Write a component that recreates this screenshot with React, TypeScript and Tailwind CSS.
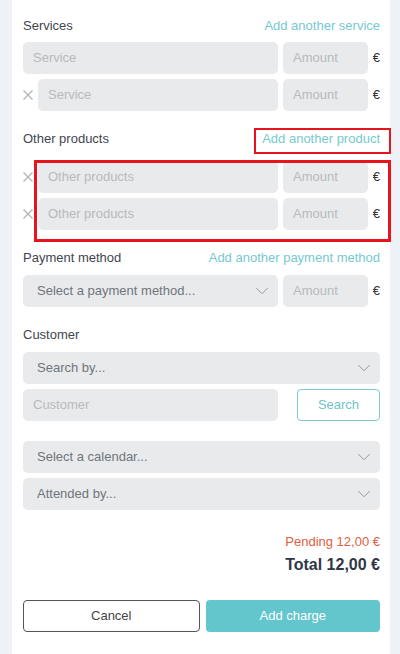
import { ChevronDown } from "lucide-react";

const font = { fontFamily: '"Liberation Sans", Arial, sans-serif' };

function Field({ placeholder, className = "" }: { placeholder: string; className?: string }) {
  return (
    <div
      className={`flex h-[32px] items-center rounded-[5px] bg-[#e9eaec] px-[10px] text-[13px] text-[#b7babe] ${className}`}
    >
      {placeholder}
    </div>
  );
}

function Select({ placeholder, className = "" }: { placeholder: string; className?: string }) {
  return (
    <div
      className={`flex h-[32px] items-center justify-between rounded-[5px] bg-[#e9eaec] pl-[14px] pr-[5px] text-[13px] text-[#6f757c] ${className}`}
    >
      <span>{placeholder}</span>
      <ChevronDown size={22} strokeWidth={1} className="text-[#8d9197]" />
    </div>
  );
}

function RemoveIcon() {
  return (
    <svg width="10" height="10" viewBox="0 0 10 10" className="mr-[5px] shrink-0">
      <path d="M0.5 0.5 L9.5 9.5 M9.5 0.5 L0.5 9.5" stroke="#b0b4b9" strokeWidth="1.3" fill="none" />
    </svg>
  );
}

function AmountRow({
  placeholder,
  removable,
  isSelect,
}: {
  placeholder: string;
  removable?: boolean;
  isSelect?: boolean;
}) {
  return (
    <div className="flex items-center">
      {removable && <RemoveIcon />}
      {isSelect ? (
        <Select placeholder={placeholder} className="flex-1" />
      ) : (
        <Field placeholder={placeholder} className="flex-1" />
      )}
      <Field placeholder="Amount" className="ml-[5px] w-[85px] shrink-0" />
      <span className="w-[12px] shrink-0 text-right text-[13px] text-[#333]">€</span>
    </div>
  );
}

function Label({ title, link }: { title: string; link?: string }) {
  return (
    <div className="flex h-[16px] items-center justify-between text-[13px] leading-[16px]">
      <span className="text-[#3f4550]">{title}</span>
      {link && <span className="text-[#76c9cf]">{link}</span>}
    </div>
  );
}

export default function App() {
  return (
    <div className="flex h-[654px] w-[400px] bg-[#eef2f6]" style={font}>
      <div className="relative ml-[12px] w-[378px] bg-white pl-[11px] pr-[10px]">
        <div className="pt-[18px]">
          <Label title="Services" link="Add another service" />
          <div className="mt-[8px] flex flex-col gap-[5px]">
            <AmountRow placeholder="Service" />
            <AmountRow placeholder="Service" removable />
          </div>
        </div>

        <div className="mt-[20px]">
          <Label title="Other products" link="Add another product" />
          <div className="mt-[14px] flex flex-col gap-[5px]">
            <AmountRow placeholder="Other products" removable />
            <AmountRow placeholder="Other products" removable />
          </div>
        </div>

        <div className="mt-[20px]">
          <Label title="Payment method" link="Add another payment method" />
          <div className="mt-[9px]">
            <AmountRow placeholder="Select a payment method..." isSelect />
          </div>
        </div>

        <div className="mt-[20px]">
          <Label title="Customer" />
          <div className="mt-[9px] flex flex-col gap-[5px]">
            <Select placeholder="Search by..." />
            <div className="flex gap-[19px]">
              <Field placeholder="Customer" className="flex-1" />
              <button className="h-[32px] w-[83px] rounded-[4px] border border-[#7ccbd0] text-[13px] text-[#6cc4ca]">
                Search
              </button>
            </div>
          </div>
        </div>

        <div className="mt-[20px] flex flex-col gap-[5px]">
          <Select placeholder="Select a calendar..." />
          <Select placeholder="Attended by..." />
        </div>

        <div className="mt-[24px] flex flex-col items-end">
          <span className="text-[13px] leading-[16px] text-[#e0603f]">Pending 12,00 €</span>
          <span className="mt-[5px] text-[16px] font-bold leading-[20px] text-[#2f3847]">
            Total 12,00 €
          </span>
        </div>

        <div className="mt-[25px] flex gap-[6px]">
          <button className="h-[32px] flex-1 rounded-[4px] border border-[#555] text-[13px] text-[#444]">
            Cancel
          </button>
          <button className="h-[32px] flex-1 rounded-[4px] bg-[#64c6cd] text-[13px] text-white">
            Add charge
          </button>
        </div>

        {/* annotation boxes */}
        <div className="pointer-events-none absolute left-[242px] top-[128px] h-[26px] w-[137px] border-2 border-[#e8141b]" />
        <div className="pointer-events-none absolute left-[22px] top-[160px] h-[82px] w-[357px] border-[3px] border-[#e8141b]" />
      </div>
    </div>
  );
}
